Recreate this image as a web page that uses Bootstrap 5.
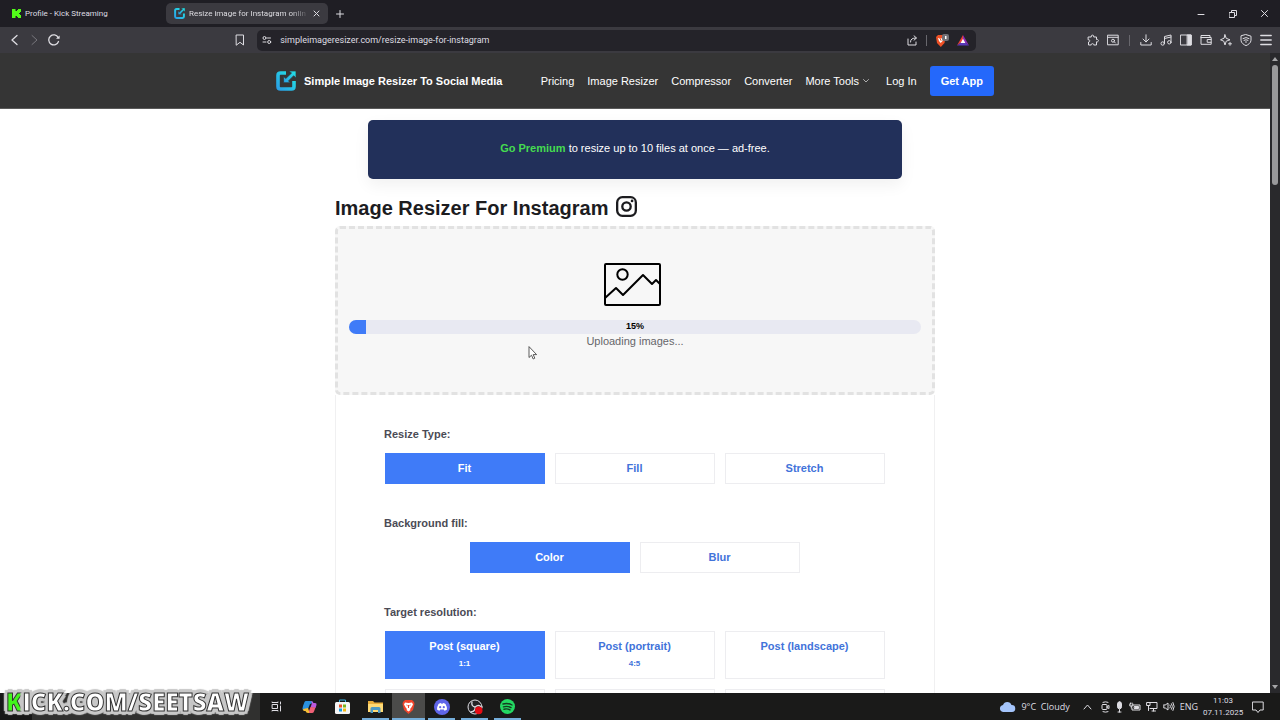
<!DOCTYPE html>
<html lang="en">
<head>
<meta charset="utf-8">
<meta name="viewport" content="width=device-width, initial-scale=1">
<title>Resize image for Instagram online</title>
<link href="https://cdn.jsdelivr.net/npm/bootstrap@5.3.0/dist/css/bootstrap.min.css" rel="stylesheet">
<style>
  body { font-family: "Liberation Sans", Arial, sans-serif; font-size: 11px; line-height: 16px; color: #1c1c1f; }
  svg { display: block; flex: none; fill: none; stroke-linecap: round; stroke-linejoin: round; }
  svg:not([stroke]) { stroke: currentColor; }
  .plain { background: none; border: 0; padding: 0; color: inherit; }

  /* browser chrome */
  .chrome, .taskbar { font-family: Roboto, "Open Sans", sans-serif; font-size: 9px; line-height: 12px; color: #dedde2; }
  .tabstrip { height: 27px; background: #1f1e24; }
  .tab-item { width: 162px; height: 21px; padding: 0 8px; border-radius: 5px; font-size: 8px; }
  .tab-item.current { background: #3b3a40; }
  .tab-title { white-space: nowrap; overflow: hidden; flex: 1; text-align: left; }
  .current .tab-title { -webkit-mask-image: linear-gradient(90deg, #000 85%, transparent); mask-image: linear-gradient(90deg, #000 85%, transparent); }
  .toolbar { height: 26px; background: #3b3a40; }
  .side-start { flex: 252 1 0; }
  .side-end { flex: 309 1 0; }
  .address { flex: 0 1 719px; height: 21px; background: #242329; border-radius: 5px; padding: 0 7px 0 5px; }
  .address input { flex: 1; min-width: 0; background: none; border: 0; outline: 0; padding: 0; color: #dedde2; }
  .divider { width: 1px; height: 11px; background: #68676d; }
  .side-end .divider { margin: 0 2px; }

  /* web page */
  .site { flex: 1; min-width: 0; overflow: hidden; background: #fff; }
  .site-head { background: #353535; height: 56px; border-bottom: 1px solid #5a5a5a; }
  .head-inner { width: 100%; max-width: 718px; }
  .brand, .site-links a { color: #fff; text-decoration: none; white-space: nowrap; }
  .site-links { gap: 13px; }
  .get-app { background: #2468fb; color: #fff; height: 30px; padding: 0 11px; border-radius: 3px; font-size: 11px; font-weight: 700; border: 0; white-space: nowrap; }
  .promo { max-width: 534px; height: 59px; margin: 11px auto 0; background: #22305a; color: #fff; border-radius: 5px; box-shadow: 0 6px 16px rgba(0,0,0,.06); }
  .promo a { color: #45dc50; font-weight: 700; text-decoration: none; }
  .tool { max-width: 600px; margin: 0 auto; }
  .tool h1 { font-size: 20px; line-height: 24px; font-weight: 700; margin: 0; }
  .tool-head { height: 47px; padding-top: 11px; }
  .dropzone { height: 169px; background: #f7f7f7; border: 3px dashed #e2e2e2; border-radius: 5px; padding: 34px 11px 0; }
  .dropzone .picture { margin: 0 auto 14px; position: relative; right: 3px; }
  .upload-bar { position: relative; height: 14px; background: #e8e9f2; border-radius: 7px; }
  .upload-bar .progress-bar { background: #3f7bf8; }
  .upload-bar span { position: absolute; inset: 0; text-align: center; font-size: 9px; line-height: 13px; font-weight: 700; color: #000; }
  .status { color: #66666a; text-align: center; line-height: 14px; }
  .panel { border: 1px solid #f0f0f1; border-top: 0; padding: 31px 49px 0 48px; }
  .panel h2 { font-size: 11px; line-height: 16px; font-weight: 700; color: #4b4b55; margin: 0 0 11px; }
  .choices { gap: 10px; margin-bottom: 31px; }
  .choice { flex: 0 1 160px; height: 31px; border: 1px solid #ededf0; border-radius: 0; padding: 0 0 2px; background: #fff; color: #4273da; font-size: 11px; font-weight: 700; line-height: 16px; }
  .choice.picked { background: #3f7bf8; border-color: #3f7bf8; color: #fff; }
  .choice.tall { height: 48px; display: flex; flex-direction: column; align-items: center; padding-top: 6px; }
  .choice small { font-size: 8px; line-height: 20px; }

  .scroll { width: 10px; background: #29292c; color: #a5a5a7; }
  .thumb { width: 6px; height: 120px; background: #99999b; border-radius: 3px; }

  /* desktop */
  .taskbar { height: 27px; background: #1a1a19; }
  .start-area { width: 260px; background: linear-gradient(90deg, #171717 32px, #30302f 32px); }
  .task { width: 33px; height: 27px; display: flex; align-items: center; justify-content: center; }
  .task.open { background: linear-gradient(#75aedb, #75aedb) bottom / 27px 2px no-repeat; }
  .task.front { background: linear-gradient(#75aedb, #75aedb) bottom / 100% 2px no-repeat #4b4b4a; }
  .tray { gap: 5px; }
  .tray > span { font-family: "Open Sans", sans-serif; }
  .clock { width: 40px; line-height: 12px; text-align: center; font-size: 8px; }
  .watermark { position: fixed; left: 6px; bottom: 2px; z-index: 5; font: 800 24px/32px "Open Sans", Lato, sans-serif; color: #fff; -webkit-text-stroke: 1px #333;
    text-shadow: 4px 0 1px #c8c8c8, -4px 0 1px #c8c8c8, 0 4px 1px #c8c8c8, 0 -4px 1px #c8c8c8, 3px 3px 1px #c8c8c8, -3px 3px 1px #c8c8c8, 3px -3px 1px #c8c8c8, -3px -3px 1px #c8c8c8; }
  .watermark b { color: #42f51b; font-weight: 800; }
  .pointer { position: fixed; left: 528px; top: 346px; z-index: 5; }
</style>
</head>
<body class="vh-100 d-flex flex-column overflow-hidden">
<svg width="0" height="0" class="position-absolute" aria-hidden="true">
  <linearGradient id="aqua" x1="1" y1="0" x2="0" y2="1"><stop stop-color="#22e5e4"/><stop offset="1" stop-color="#2aa0e6"/></linearGradient>
  <symbol id="resizer" viewBox="0 0 20 20"><path d="M10 2H4.500Q2 2 2 4.500v11Q2 18 4.500 18h11q2.500 0 2.500-2.500V10" fill="none" stroke="url(#aqua)" stroke-width="3.600" stroke-linecap="butt"/><path d="M13 0h7v7l-2.300-2.300-5.200 5.200 1.800 1.800H7.600V5.500l2.200 2L15.300 2.300z" fill="url(#aqua)" stroke="#303538" stroke-width=".7"/></symbol>
</svg>

<header class="chrome">
  <div class="tabstrip d-flex align-items-center">
    <button class="tab-item plain d-flex align-items-center gap-1 ms-1 ps-1">
      <svg class="ms-1" width="9" height="9" viewBox="0 0 9 9" stroke="none"><path fill="#52fb19" d="M0 0h3.500v2H5V1h1V0h3v3H8v1H7v1h1v1h1v3H6V8H5V7H3.500v2H0z"/></svg>
      <span class="tab-title">Profile - Kick Streaming</span>
    </button>
    <div class="tab-item current d-flex align-items-center gap-1">
      <svg width="11" height="11"><use href="#resizer"/></svg>
      <span class="tab-title">Resize image for Instagram onlin</span>
      <button class="plain" aria-label="Close tab"><svg width="7" height="7" viewBox="0 0 7 7"><path d="M1 1l5 5M6 1L1 6"/></svg></button>
    </div>
    <button class="plain ms-2" aria-label="New tab"><svg width="8" height="8" viewBox="0 0 8 8"><path d="M4 .5v7M.5 4h7"/></svg></button>
    <div class="ms-auto d-flex align-items-center gap-4 pe-2 me-1">
      <button class="plain" aria-label="Minimise"><svg width="8" height="8" viewBox="0 0 8 8"><path d="M1 4.500h6"/></svg></button>
      <button class="plain" aria-label="Restore"><svg width="8" height="8" viewBox="0 0 8 8"><path d="M.5 2.500h5v5h-5zM2.500 2.500v-2h5v5h-2"/></svg></button>
      <button class="plain" aria-label="Close"><svg width="7" height="7" viewBox="0 0 7 7"><path d="M.5.5l6 6M6.500.5l-6 6"/></svg></button>
    </div>
  </div>
  <div class="toolbar d-flex align-items-center">
    <div class="side-start d-flex align-items-center gap-2 ps-2 pe-2">
      <button class="plain" aria-label="Back"><svg width="12" height="12" viewBox="0 0 12 12"><path stroke-width="1.300" d="M9 1.500L4 6l5 4.500"/></svg></button>
      <button class="plain" aria-label="Forward"><svg width="12" height="12" viewBox="0 0 12 12"><path stroke="#77767c" d="M4 1.500L9 6l-5 4.500"/></svg></button>
      <button class="plain" aria-label="Reload"><svg width="12" height="12" viewBox="0 0 12 12"><path stroke-width="1.300" d="M10.500 7.500A5 5 0 1 1 10.200 3.600"/><path d="M8 4.700h3.600V1.500z" fill="currentColor" stroke="none"/></svg></button>
      <button class="plain ms-auto me-1" aria-label="Bookmark"><svg width="10" height="12" viewBox="0 0 10 12"><path d="M1.500 1h7v10L5 8.300 1.500 11z"/></svg></button>
    </div>
    <div class="address d-flex align-items-center gap-2">
      <svg width="10" height="10" viewBox="0 0 10 10"><circle cx="2.500" cy="3" r="1.500"/><path d="M5.500 3h3M1 7h3"/><circle cx="7.200" cy="7" r="1.500"/></svg>
      <input type="text" aria-label="Address" value="simpleimageresizer.com/resize-image-for-instagram">
      <svg width="11" height="11" viewBox="0 0 11 11"><path d="M1 4v6h8V7M3.500 7c0-3 2-4 5.500-4M7 .8L9.500 3 7 5.200"/></svg>
      <span class="divider"></span>
      <svg width="14" height="15" viewBox="0 0 14 15" stroke="none"><path fill="#ee5126" d="M1 4l2-2h5l2.500 2-1 6L5.800 14 2 10z"/><path fill="#fff" d="M3 5l2.700.6L8.500 5 7.600 8 5.700 10 4 8z"/><path stroke="#ee5126" d="M5 5.500l1 2"/><rect x="7" y="1" width="7" height="7" rx="2" fill="#717076"/><path fill="#fff" d="M10 3h1.500v3H10z"/></svg>
      <svg width="12" height="11" viewBox="0 0 12 11" stroke="none"><path fill="#ec3f37" d="M6 0L0 10.500 6 6z"/><path fill="#8c2bb5" d="M6 0l6 10.500L6 6z"/><path fill="#5938ba" d="M0 10.500h12L6 6z"/><path fill="#fff" d="M6 3.800L8.400 8H3.600z"/></svg>
    </div>
    <div class="side-end d-flex align-items-center justify-content-end gap-2 pe-2">
      <svg width="12" height="12" viewBox="0 0 12 12"><path d="M1.500 3h2.800c-.8-2.500 3.200-2.500 2.400 0H9.500v2.500c2.500-.7 2.500 3 0 2.300V11H6.700c.6-1.800-3-1.800-2.400 0H1.500V8c1.800.3 1.800-2.800 0-2.300z"/></svg>
      <svg width="12" height="12" viewBox="0 0 12 12"><path d="M.8 1.200h10.400v9.600H.8zM1 3.300h10"/><circle cx="6" cy="6.700" r="1.500"/><path d="M7.200 7.800l1.200 1.200"/></svg>
      <span class="divider"></span>
      <svg width="12" height="12" viewBox="0 0 12 12"><path d="M6 .8v7M3 5l3 3 3-3M.8 8.500V11h10.400V8.500"/></svg>
      <svg width="12" height="12" viewBox="0 0 12 12"><path d="M4.500 9.500V2.500l6.500-1.500v7M4.500 4.500L11 3"/><circle cx="2.700" cy="9.500" r="1.700"/><circle cx="9.300" cy="8.300" r="1.700"/></svg>
      <svg width="12" height="12" viewBox="0 0 12 12"><path d="M.8 1h10.400v10H.8z"/><path d="M7.500 1h3.700v10H7.500z" fill="currentColor"/></svg>
      <svg width="12" height="12" viewBox="0 0 12 12"><path d="M10 3.500V1.500H1v8.800h10.200V3.500H1M11 5.500H7.200v2.800H11"/></svg>
      <svg width="12" height="12" viewBox="0 0 12 12"><path d="M5 .8l1.200 3.500L10 5.800 6.200 7.200 5 11 3.800 7.200.5 5.800l3.300-1.500zM10 8.300v3M8.500 9.800h3"/></svg>
      <svg width="12" height="12" viewBox="0 0 12 12"><path d="M6 .6l5 1.600v4C11 9 8 10.800 6 11.600 4 10.800 1 9 1 6.200v-4zM3 4.500q3-2 6 0M4 6.300q2-1.300 4 0M5.500 8h1"/></svg>
      <button class="plain" aria-label="Menu"><svg width="12" height="12" viewBox="0 0 12 12"><path stroke-width="1.400" d="M.8 1.500h10.400M.8 6h10.400M.8 10.500h10.400"/></svg></button>
    </div>
  </div>
</header>

<main class="d-flex flex-fill overflow-hidden">
  <div class="site">
    <div class="site-head d-flex align-items-center">
      <div class="head-inner mx-auto d-flex align-items-center">
        <a href="#" class="brand d-flex align-items-center gap-2 fw-bold"><svg width="20" height="20"><use href="#resizer"/></svg>Simple Image Resizer To Social Media</a>
        <nav class="site-links d-flex align-items-center ms-auto">
          <a href="#">Pricing</a><a href="#">Image Resizer</a><a href="#">Compressor</a><a href="#">Converter</a>
          <a href="#" class="d-flex align-items-center gap-1">More Tools <svg width="6" height="4" viewBox="0 0 6 4" stroke-opacity=".6"><path d="M.5.5L3 3 5.500.5"/></svg></a>
          <a href="#" class="ms-1">Log In</a>
          <button class="get-app">Get App</button>
        </nav>
      </div>
    </div>
    <div class="promo d-flex align-items-center justify-content-center pb-1"><div><a href="#">Go Premium</a> to resize up to 10 files at once — ad-free.</div></div>
    <div class="tool">
      <div class="tool-head d-flex align-items-center gap-2">
        <h1>Image Resizer For Instagram</h1>
        <svg class="mb-1" width="21" height="21" viewBox="0 0 20 20" stroke-width="2.200"><rect x="1.100" y="1.100" width="17.800" height="17.800" rx="5"/><circle cx="10" cy="10" r="4"/><circle cx="15.300" cy="4.700" r="1.300" fill="currentColor" stroke="none"/></svg>
      </div>
      <div class="dropzone">
        <svg class="picture" width="57" height="43" viewBox="0 0 57 43" stroke="#000" stroke-width="2"><rect x="1" y="1" width="55" height="41" rx="1"/><circle cx="18.500" cy="11.500" r="5.200"/><path d="M1 35l11-10 7 7 20-20 9 9 4-4 4 4"/></svg>
        <div class="upload-bar progress" role="progressbar" aria-label="Upload" aria-valuenow="15" aria-valuemin="0" aria-valuemax="100"><div class="progress-bar" style="width:3%"></div><span>15%</span></div>
        <div class="status">Uploading images...</div>
      </div>
      <div class="panel">
        <h2>Resize Type:</h2>
        <div class="choices d-flex justify-content-center"><button class="choice picked">Fit</button><button class="choice">Fill</button><button class="choice">Stretch</button></div>
        <h2>Background fill:</h2>
        <div class="choices d-flex justify-content-center"><button class="choice picked">Color</button><button class="choice">Blur</button></div>
        <h2>Target resolution:</h2>
        <div class="choices d-flex flex-wrap justify-content-center">
          <button class="choice tall picked">Post (square)<small>1:1</small></button><button class="choice tall">Post (portrait)<small>4:5</small></button><button class="choice tall">Post (landscape)</button>
          <button class="choice tall" aria-label="More sizes"></button><button class="choice tall" aria-label="More sizes"></button><button class="choice tall" aria-label="More sizes"></button>
        </div>
      </div>
    </div>
  </div>
  <div class="scroll d-flex flex-column align-items-center py-1">
    <svg width="6" height="4" viewBox="0 0 6 4" class="mb-1"><path fill="currentColor" stroke="none" d="M0 4l3-4 3 4z"/></svg>
    <div class="thumb"></div>
    <svg width="6" height="4" viewBox="0 0 6 4" class="mt-auto"><path fill="currentColor" stroke="none" d="M0 0l3 4 3-4z"/></svg>
  </div>
</main>

<footer class="taskbar d-flex">
  <div class="start-area"></div>
  <button class="task plain" aria-label="Task view"><svg width="11" height="11" viewBox="0 0 11 11"><path d="M1.500 3.500h5v4h-5zM1 1v.5h6V1M1 10v-.5h6v.5M9.500 1v2M9.500 5v5"/></svg></button>
  <button class="task plain" aria-label="Copilot"><svg width="15" height="14" viewBox="0 0 15 14" stroke="none"><path fill="#2a91df" d="M4 1h5q1.500 0 2 2l-3 1-2 5-5 1Q0 9 1 6l1.500-4Q3 1 4 1z"/><path fill="#f5bd35" d="M1 9l5-1 1 3q.5 2 2 2H6q-2 0-2.500-2H2q-1 0-1-2z"/><path fill="#ba59df" d="M9 1q2 0 2.500 2H13q2 0 1.500 2l-1 3-5-.5L10 3z"/><path fill="#ef6076" d="M8.500 7l5 .5-1.500 4q-.5 1.500-2 1.500H8q-1.500 0-1-2z"/></svg></button>
  <button class="task plain" aria-label="Store"><svg width="15" height="15" viewBox="0 0 15 15"><path stroke="#3bb4e4" d="M4.500 4V1h6v3"/><rect x="0" y="3" width="15" height="12" rx="1.500" fill="#f5f5f5" stroke="none"/><g stroke="none"><path fill="#e94f25" d="M4 5.500h3v3H4z"/><path fill="#79b51c" d="M8 5.500h3v3H8z"/><path fill="#169de0" d="M4 9.500h3v3H4z"/><path fill="#f4b813" d="M8 9.500h3v3H8z"/></g></svg></button>
  <button class="task open plain" aria-label="Files"><svg width="15" height="13" viewBox="0 0 15 13" stroke="none"><path fill="#e9ae3c" d="M0 1h5l1.500 1.500H15V12H0z"/><path fill="#ffda75" d="M0 4h15v8H0z"/><path fill="#4e9ac5" d="M2.500 13V8.500q0-1.500 1.500-1.500h7q1.500 0 1.500 1.500V13H10v-3H5v3z"/></svg></button>
  <button class="task front plain" aria-label="Brave"><svg width="13" height="15" viewBox="0 0 13 15" stroke="none"><path fill="#f0442b" d="M1 3l2-2h7l2 2 .5 2-1.500 6-4.500 4L2 11 .5 5z"/><path fill="#fff" d="M3 3.500l3.500.6 3.500-.6 1 2L9 9l-1 1 .5 1-2 1.500-2-1.500.5-1-1-1-2-3.500z"/><path fill="#f0442b" d="M4 5.500l1.500.5v1.500zM9 5.500L7.500 6v1.500zM6 6h1v3H6z"/></svg></button>
  <button class="task open plain" aria-label="Discord"><svg width="16" height="16" viewBox="0 0 16 16" stroke="none"><circle cx="8" cy="8" r="8" fill="#5f65e9"/><path fill="#fff" d="M4.500 5q1.500-1 2.500-1l.4.8h1.200L9 4q1 0 2.500 1 1.500 2.500 1.500 5.500-1 1-2.500 1.200L9.800 10.600H6.200l-.7 1.100Q4 11.500 3 10.500 3 7.500 4.500 5z"/><circle cx="6.200" cy="8.200" r="1.100" fill="#5f65e9"/><circle cx="9.800" cy="8.200" r="1.100" fill="#5f65e9"/></svg></button>
  <button class="task open plain" aria-label="Recorder"><svg width="16" height="16" viewBox="0 0 16 16"><circle cx="8" cy="8" r="7" fill="#252426"/><path d="M8 8q-4-1-3-5M8 8q4-3 6 0M8 8q1 4-4 5" stroke-width="1.300"/><circle cx="11.700" cy="11.400" r="3.800" fill="#e50b13" stroke="none"/></svg></button>
  <button class="task open plain" aria-label="Music"><svg width="15" height="15" viewBox="0 0 15 15"><circle cx="7.500" cy="7.500" r="7.500" fill="#24d862" stroke="none"/><path stroke="#153b20" stroke-width="1.400" d="M3 5q4.500-1.500 9 1M3.500 7.800q4-1.200 7.500.8M4 10.200q3-.8 6 .7"/></svg></button>

  <div class="tray ms-auto d-flex align-items-center pe-3">
    <svg width="17" height="11" viewBox="0 0 17 11" stroke="none"><path fill="#a4c4fa" d="M4 11a4 3.600 0 0 1 0-7 4.500 4.500 0 0 1 8.500 0A3.500 3.500 0 0 1 13 11z"/></svg>
    <span class="me-2">9°C&nbsp; Cloudy</span>
    <svg width="9" height="10" viewBox="0 0 9 10"><path d="M1 7l3.500-4L8 7"/></svg>
    <svg class="ms-1" width="9" height="12" viewBox="0 0 9 12"><rect x="1" y="3.500" width="5" height="5" rx="1"/><path d="M6 5.500l2-1v3l-2-1M2 1.300q2.500-1 5 0M2 10.700q2.500 1 5 0"/></svg>
    <svg width="9" height="12" viewBox="0 0 9 12"><rect x="2.500" y=".8" width="4" height="7" rx="2" fill="currentColor"/><path d="M4.500 8.500v2.500M3 11h3"/></svg>
    <svg width="12" height="10" viewBox="0 0 12 10"><path d="M4 3h7v5H3V6" /><path d="M5.500 4.500h4v2h-4z" fill="currentColor"/><path d="M.8 2v2h3V2M1.500 1v1M3 1v1M2.300 4v2"/></svg>
    <svg width="12" height="11" viewBox="0 0 12 11"><path d="M4 1.500h7v6H4M6 10h3.500M7.500 7.500V10M1 1.500h3v3H1zM2.500 4.500v5"/></svg>
    <svg width="12" height="11" viewBox="0 0 12 11"><path d="M.8 4v3h1.500L5 9V2L2.300 4zM7 4q1 1.500 0 3M8.500 2.700q2 2.800 0 5.600M10 1.500q2.500 4 0 8"/></svg>
    <span>ENG</span>
    <div class="clock">11:03<br>07.11.2025</div>
    <button class="plain ms-1" aria-label="Notifications"><svg width="12" height="12" viewBox="0 0 12 12"><path d="M.8 1h10.400v8H8l-2 2.500L4 9H.8z"/></svg></button>
  </div>
</footer>

<div class="watermark"><b>K</b>ICK.COM/SEETSAW</div>
<svg class="pointer" width="9" height="14" viewBox="0 0 9 14"><path fill="#fff" stroke="#333" stroke-width=".8" d="M1 1v10.500l2.500-2.300 1.700 3.800 1.600-.8-1.600-3.600h3z"/></svg>

<script src="https://cdn.jsdelivr.net/npm/bootstrap@5.3.0/dist/js/bootstrap.bundle.min.js"></script>
</body>
</html>
